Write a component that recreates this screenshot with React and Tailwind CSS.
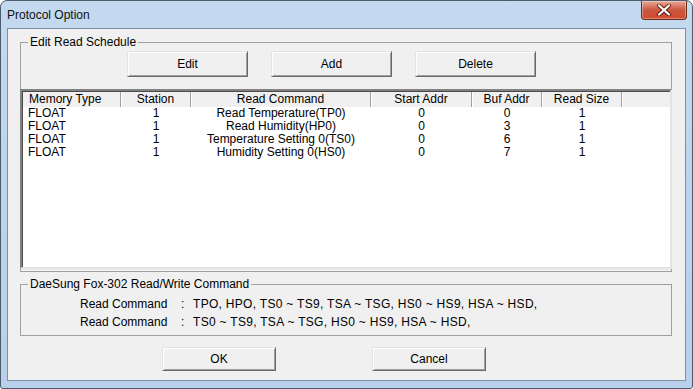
import React from 'react'

const columns = [
    { title: 'Memory Type', w: 'w-[98px]', head: 'text-left pl-[6px]', cell: 'text-left pl-[5px]' },
    { title: 'Station', w: 'w-[70px]', head: 'text-center', cell: 'text-center' },
    { title: 'Read Command', w: 'w-[180px]', head: 'text-center', cell: 'text-center' },
    { title: 'Start Addr', w: 'w-[101px]', head: 'text-center', cell: 'text-center' },
    { title: 'Buf Addr', w: 'w-[70px]', head: 'text-center', cell: 'text-center' },
    { title: 'Read Size', w: 'w-[80px]', head: 'text-center', cell: 'text-center' },
]

const rows = [
    ['FLOAT', '1', 'Read Temperature(TP0)', '0', '0', '1'],
    ['FLOAT', '1', 'Read Humidity(HP0)', '0', '3', '1'],
    ['FLOAT', '1', 'Temperature Setting 0(TS0)', '0', '6', '1'],
    ['FLOAT', '1', 'Humidity Setting 0(HS0)', '0', '7', '1'],
]

function WinButton({ children, className = '' }) {
    return (
        <button className={"bg-[#f0f0f0] border border-t-[#e3e3e3] border-l-[#e3e3e3] border-r-[#696969] border-b-[#696969] shadow-[inset_1px_1px_0_#ffffff,inset_-1px_-1px_0_#a0a0a0] text-[12px] text-black leading-none " + className}>
            {children}
        </button>
    )
}

function CloseIcon() {
    return (
        <svg width="16" height="12" viewBox="0 0 16 12">
            <path d="M3 1.5 L13 10.5 M13 1.5 L3 10.5" stroke="#5a1a10" strokeWidth="4" strokeLinecap="round" />
            <path d="M3 1.5 L13 10.5 M13 1.5 L3 10.5" stroke="#ffffff" strokeWidth="2.2" strokeLinecap="round" />
        </svg>
    )
}

export default function App() {
    return (
        <div className="w-[693px] h-[389px] font-['Liberation_Sans',Arial,sans-serif] text-[12px] text-black bg-white">
            <div className="w-full h-full flex flex-col px-[6px] border border-[#4e5b6b] rounded-t-[7px] rounded-b-[3px] bg-gradient-to-b from-[#c3d9f0] via-[#bcd4ed] to-[#b8d0ea]">
                {/* title bar */}
                <div className="h-[27px] flex justify-between items-start shrink-0">
                    <div className="mt-[7px] text-[12px] leading-[14px] text-[#111]">Protocol Option</div>
                    <div className="w-[46px] h-[19px] -mr-[1px] flex items-center justify-center rounded-b-[4px] border border-t-0 border-[#6b2a1e] bg-gradient-to-b from-[#e9a898] via-[#c9573e] to-[#d2492d] shadow-[inset_0_0_0_1px_rgba(255,255,255,0.35)]">
                        <CloseIcon />
                    </div>
                </div>

                {/* client area */}
                <div className="h-[353px] shrink-0 border border-[#7f8fa2] bg-[#f0f0f0] flex flex-col">
                    <fieldset className="ml-[12px] mt-[6px] w-[652px] border border-[#a0a0a0] pb-[2px]">
                        <legend className="ml-[7px] px-[2px] leading-[14px]">Edit Read Schedule</legend>
                        <div className="flex gap-[23px] pl-[106px] mt-[2px]">
                            <WinButton className="w-[121px] h-[26px]">Edit</WinButton>
                            <WinButton className="w-[121px] h-[26px]">Add</WinButton>
                            <WinButton className="w-[121px] h-[26px]">Delete</WinButton>
                        </div>
                        <div className="mt-[12px] -ml-[1px] -mr-[1px] h-[180px] bg-white border-2 border-t-[#828282] border-l-[#828282] border-r-[#e3e3e3] border-b-[#e3e3e3] shadow-[inset_1px_1px_0_#4a4a4a]">
                            <div className="flex h-[15px] mt-[1px] ml-[1px] bg-[#f0f0f0] leading-[15px]">
                                {columns.map((c) => (
                                    <div key={c.title} className={c.w + ' ' + c.head + ' shrink-0 border-r border-[#a0a0a0] shadow-[1px_0_0_#ffffff] whitespace-nowrap'}>
                                        {c.title}
                                    </div>
                                ))}
                                <div className="flex-1"></div>
                            </div>
                            <div className="ml-[1px]">
                                {rows.map((r, i) => (
                                    <div key={i} className="flex h-[13px] leading-[13px]">
                                        {r.map((v, j) => (
                                            <div key={j} className={columns[j].w + ' ' + columns[j].cell + ' shrink-0 whitespace-nowrap'}>
                                                {v}
                                            </div>
                                        ))}
                                    </div>
                                ))}
                            </div>
                        </div>
                    </fieldset>

                    <fieldset className="ml-[12px] mt-[5px] w-[652px] border border-[#a0a0a0] pt-[4px] pb-[4px]">
                        <legend className="ml-[7px] px-[2px] leading-[14px]">DaeSung Fox-302 Read/Write Command</legend>
                        <div className="pl-[59px] leading-[18px]">
                            <div className="flex">
                                <span className="w-[101px]">Read Command</span>
                                <span className="w-[12px]">:</span>
                                <span className="tracking-[0.3px]">TPO, HPO, TS0 ~ TS9, TSA ~ TSG, HS0 ~ HS9, HSA ~ HSD,</span>
                            </div>
                            <div className="flex">
                                <span className="w-[101px]">Read Command</span>
                                <span className="w-[12px]">:</span>
                                <span className="tracking-[0.3px]">TS0 ~ TS9, TSA ~ TSG, HS0 ~ HS9, HSA ~ HSD,</span>
                            </div>
                        </div>
                    </fieldset>

                    <div className="flex gap-[96px] pl-[154px] mt-[11px]">
                        <WinButton className="w-[114px] h-[24px]">OK</WinButton>
                        <WinButton className="w-[114px] h-[24px]">Cancel</WinButton>
                    </div>
                </div>
            </div>
        </div>
    )
}
